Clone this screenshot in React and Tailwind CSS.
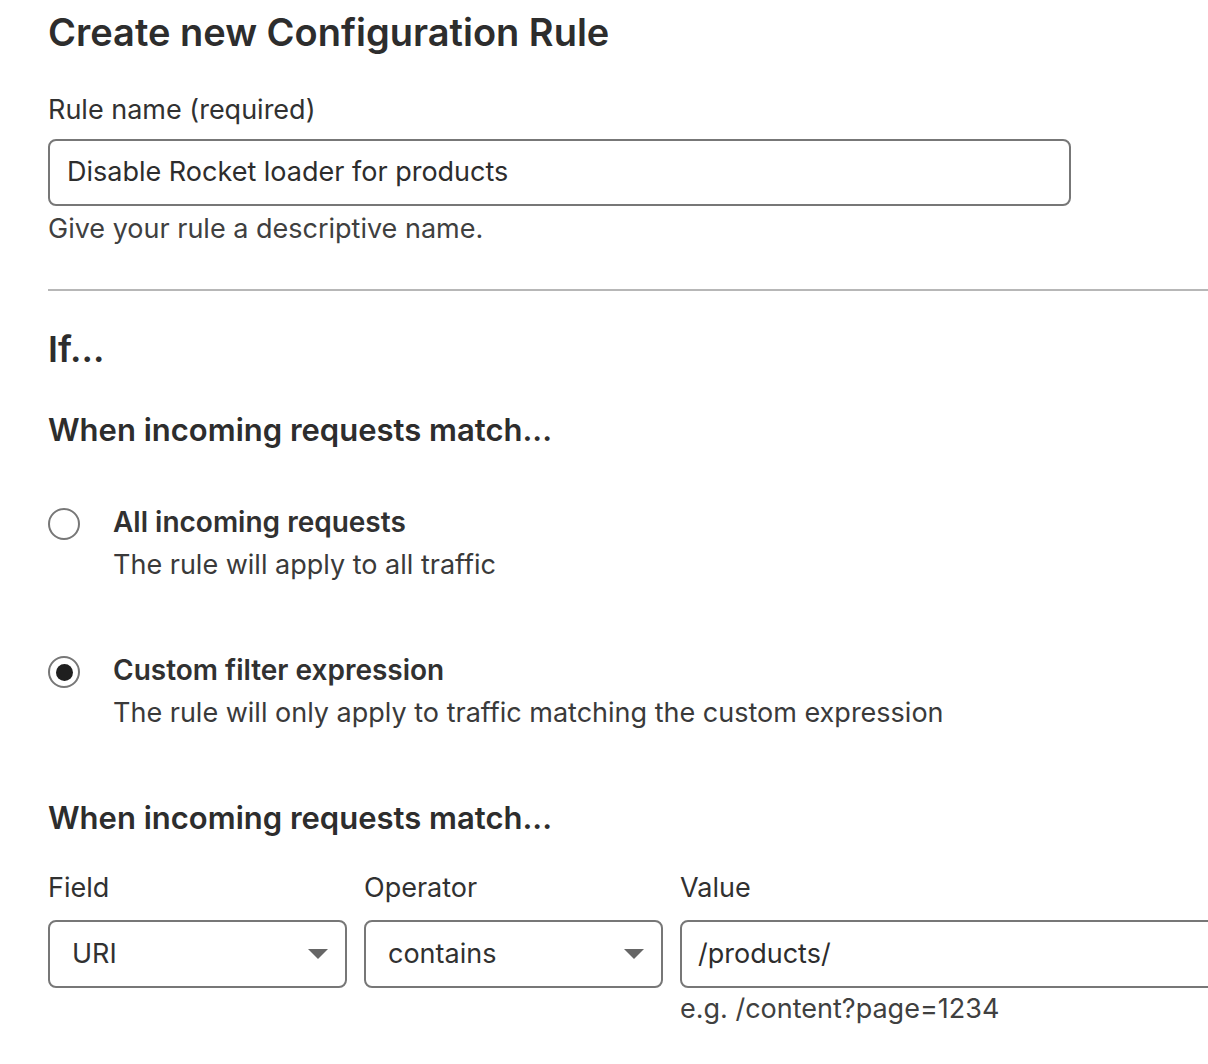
import React from "react";

const Radio = ({ checked }) => (
  <span className="mt-[3px] flex h-[32px] w-[32px] shrink-0 items-center justify-center rounded-full border-2 border-[#777] bg-white">
    {checked && <span className="h-[17px] w-[17px] rounded-full bg-[#1f1f1f]" />}
  </span>
);

const Option = ({ checked, title, desc }) => (
  <div className="flex gap-[33px]">
    <Radio checked={checked} />
    <div>
      <div className="text-[28px] font-semibold leading-[34px] text-[#313131]">{title}</div>
      <div className="mt-[9px] text-[27px] leading-[34px] text-[#3a3a3a]">{desc}</div>
    </div>
  </div>
);

const Select = ({ value }) => (
  <div className="flex h-[68px] w-[299px] items-center justify-between rounded-[8px] border-2 border-[#777] bg-white pl-[22px] pr-[16px]">
    <span className="text-[27px] text-[#313131]">{value}</span>
    <svg width="22" height="12" viewBox="0 0 22 12">
      <path d="M1 1h20L11 11z" fill="#666" />
    </svg>
  </div>
);

export default function App() {
  return (
    <div className="w-full overflow-hidden bg-white" style={{ fontFamily: "Inter, 'Noto Sans', sans-serif" }}>
      <div className="w-[1400px] pl-[48px] pt-[10px] pb-[40px]">
        <h1 className="text-[38px] font-semibold leading-[44px] text-[#2d2d2d]">
          Create new Configuration Rule
        </h1>

        <label className="mt-[39px] block text-[27px] leading-[34px] text-[#313131]">Rule name (required)</label>
        <div className="mt-[12px] flex h-[67px] w-[1023px] items-center rounded-[8px] border-2 border-[#777] px-[17px] text-[27px] text-[#2d2d2d]">
          Disable Rocket loader for products
        </div>
        <p className="mt-[6px] text-[27px] leading-[34px] text-[#404040]">Give your rule a descriptive name.</p>

        <div className="mt-[43px] h-[2px] w-full bg-[#b7b7b7]" />

        <h2 className="mt-[36px] text-[36px] font-semibold leading-[44px] text-[#2d2d2d]">If...</h2>

        <h3 className="mt-[40px] text-[31px] font-semibold leading-[38px] text-[#2d2d2d]">
          When incoming requests match...
        </h3>

        <div className="mt-[56px] flex flex-col gap-[71px]">
          <Option checked={false} title="All incoming requests" desc="The rule will apply to all traffic" />
          <Option
            checked
            title="Custom filter expression"
            desc="The rule will only apply to traffic matching the custom expression"
          />
        </div>

        <h3 className="mt-[69px] text-[31px] font-semibold leading-[38px] text-[#2d2d2d]">
          When incoming requests match...
        </h3>

        <div className="mt-[34px] flex gap-[17px]">
          <div>
            <div className="text-[27px] leading-[34px] text-[#313131]">Field</div>
            <div className="mt-[15px]">
              <Select value="URI" />
            </div>
          </div>
          <div>
            <div className="text-[27px] leading-[34px] text-[#313131]">Operator</div>
            <div className="mt-[15px]">
              <Select value="contains" />
            </div>
          </div>
          <div>
            <div className="text-[27px] leading-[34px] text-[#313131]">Value</div>
            <div className="mt-[15px] flex h-[68px] w-[640px] items-center rounded-[8px] border-2 border-[#777] pl-[16px] text-[27px] text-[#2d2d2d]">
              /products/
            </div>
            <div className="mt-[4px] text-[27px] leading-[34px] text-[#404040]">e.g. /content?page=1234</div>
          </div>
        </div>
      </div>
    </div>
  );
}
